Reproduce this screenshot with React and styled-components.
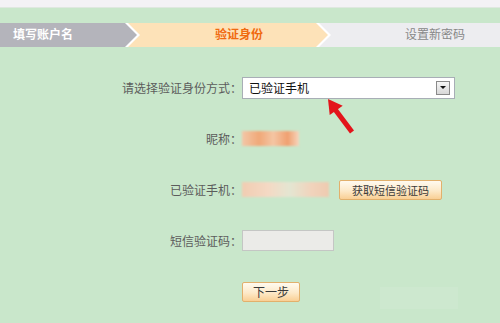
import React from 'react'
import styled, { createGlobalStyle } from 'styled-components'

const GlobalStyle = createGlobalStyle`
  html, body {
    margin: 0;
    padding: 0;
    background: #c9e7cb;
    font-family: "Liberation Sans", "Noto Sans CJK SC", sans-serif;
  }
`

const Page = styled.div`
  position: relative;
  width: 500px;
  height: 323px;
  overflow: hidden;
  background: #c9e7cb;
`

const TopStrip = styled.div`
  height: 7px;
  background: #f3f2f5;
  border-bottom: 1px solid #dfe8e0;
`

const StepBar = styled.div`
  display: flex;
  margin-top: 15px;
  height: 24px;
`

const ARROW_OUT = 'polygon(0 0, calc(100% - 12px) 0, 100% 50%, calc(100% - 12px) 100%, 0 100%)'
const ARROW_IN = 'polygon(0 0, calc(100% - 15px) 0, calc(100% - 3px) 50%, calc(100% - 15px) 100%, 0 100%)'

const Step = styled.div`
  position: relative;
  height: 24px;
  flex: ${p => (p.$grow ? '1' : 'none')};
  width: ${p => (p.$w ? `${p.$w}px` : 'auto')};
  margin-left: ${p => (p.$first ? 0 : -15)}px;
  z-index: ${p => p.$z};
  background: ${p => (p.$arrow ? '#fff' : 'transparent')};
  clip-path: ${p => (p.$arrow ? ARROW_OUT : 'none')};
`

const StepFill = styled.div`
  height: 100%;
  box-sizing: border-box;
  padding-left: ${p => p.$pad}px;
  background: ${p => p.$bg};
  clip-path: ${p => (p.$arrow ? ARROW_IN : 'none')};
  color: ${p => p.$color};
  font-weight: ${p => (p.$bold ? 'bold' : 'normal')};
  font-size: 12px;
  line-height: 24px;
  white-space: nowrap;
`

const Form = styled.div`
  display: grid;
  grid-template-columns: 242px 1fr;
  grid-auto-rows: 51px;
  margin-top: 15px;
  align-items: center;
`

const Label = styled.div`
  text-align: right;
  font-size: 12px;
  color: #5c5c5c;
  white-space: nowrap;
`

const Field = styled.div`
  display: flex;
  align-items: center;
`

const Select = styled.div`
  width: 213px;
  height: 22px;
  box-sizing: border-box;
  display: flex;
  align-items: center;
  justify-content: space-between;
  padding: 0 4px 0 6px;
  background: #fff;
  border: 1px solid #a8aeb6;
  font-size: 12px;
  color: #111;
`

const DropBtn = styled.div`
  width: 14px;
  height: 14px;
  box-sizing: border-box;
  border: 1px solid #8a8a8a;
  background: linear-gradient(#f6f6f6, #d8d8d8);
  display: flex;
  align-items: center;
  justify-content: center;
  &::after {
    content: '';
    border-left: 3px solid transparent;
    border-right: 3px solid transparent;
    border-top: 3px solid #111;
  }
`

const Blur = styled.div`
  width: ${p => p.$w}px;
  height: 15px;
  background: ${p => p.$bg};
  filter: blur(1px);
`

const Btn = styled.button`
  height: ${p => p.$h}px;
  width: ${p => p.$w}px;
  margin-left: ${p => p.$ml || 0}px;
  padding: 0;
  border: 1px solid #e2b06c;
  border-radius: 2px;
  background: linear-gradient(#fffaf0, #fde9c8 55%, #f9cf94);
  font-family: "Liberation Sans", "Noto Sans CJK SC", sans-serif;
  font-size: ${p => p.$fs}px;
  color: #3a3a3a;
`

const Input = styled.div`
  width: 92px;
  height: 21px;
  box-sizing: border-box;
  background: #ebebe8;
  border: 1px solid #c4c6c4;
`

const Ghost = styled.div`
  width: 78px;
  height: 22px;
  margin: 12px 0 0 80px;
  background: rgba(255, 255, 255, 0.08);
`

const ArrowMark = styled.svg`
  position: absolute;
  left: 320px;
  top: 95px;
`

export default function App() {
  return (
    <Page>
      <GlobalStyle />
      <TopStrip />
      <StepBar>
        <Step $first $arrow $w={140} $z={3}>
          <StepFill $arrow $bg="#b4b4bb" $pad={13} $color="#fff" $bold>填写账户名</StepFill>
        </Step>
        <Step $arrow $w={206} $z={2}>
          <StepFill $arrow $bg="#fde2b8" $pad={90} $color="#f06a10" $bold>验证身份</StepFill>
        </Step>
        <Step $grow $z={1}>
          <StepFill $bg="#ededf0" $pad={89} $color="#888">设置新密码</StepFill>
        </Step>
      </StepBar>

      <Form>
        <Label>请选择验证身份方式：</Label>
        <Field>
          <Select>
            <span>已验证手机</span>
            <DropBtn />
          </Select>
        </Field>

        <Label>昵称：</Label>
        <Field>
          <Blur $w={57} $bg="linear-gradient(90deg, #f3c8a8 0%, #f0a878 30%, #f4c6a4 55%, #f0a070 80%, #f6d6be 100%)" />
        </Field>

        <Label>已验证手机：</Label>
        <Field>
          <Blur $w={87} $bg="linear-gradient(90deg, #f1cdb2 0%, #f4d9c4 30%, #e4e6d2 55%, #f1d3bc 80%, #eecbb0 100%)" />
          <Btn $w={103} $h={20} $fs={11} $ml={10}>获取短信验证码</Btn>
        </Field>

        <Label>短信验证码：</Label>
        <Field>
          <Input />
        </Field>

        <div />
        <Field>
          <Btn $w={58} $h={20} $fs={12}>下一步</Btn>
          <Ghost />
        </Field>
      </Form>

      <ArrowMark width="40" height="42" viewBox="0 0 40 42">
        <line x1="14" y1="13" x2="32" y2="37" stroke="#e3141b" strokeWidth="5" />
        <polygon points="8,4 9.7,20.1 22.7,10.7" fill="#e3141b" />
      </ArrowMark>
    </Page>
  )
}
